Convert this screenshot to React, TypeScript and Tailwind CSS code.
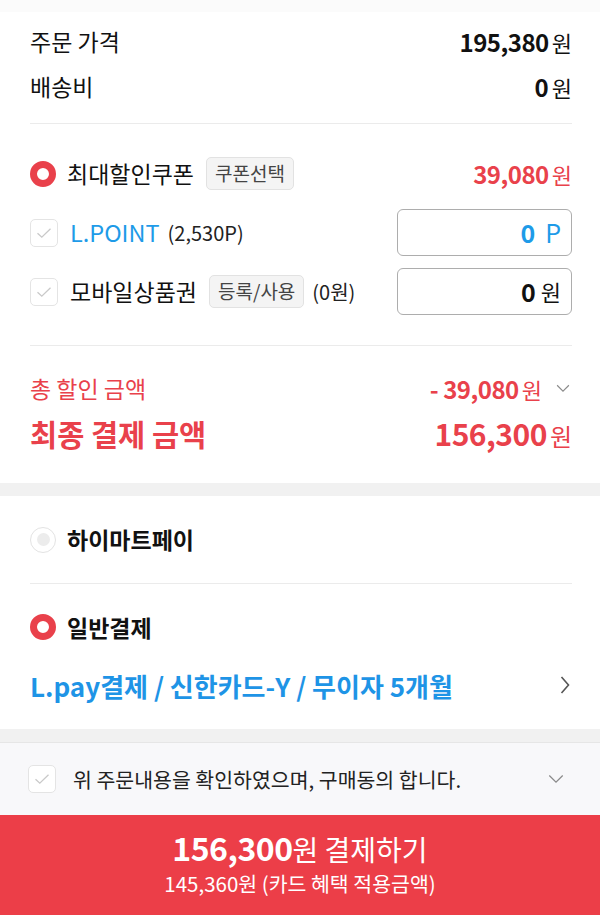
import React from "react";

/* ------------------------------------------------------------------ */
/*  Small pieces                                                       */
/* ------------------------------------------------------------------ */

const FONT = { fontFamily: '"Noto Sans CJK KR", "Noto Sans", sans-serif' };

function RadioOn() {
  return (
    <span className="box-border inline-block h-[26px] w-[26px] shrink-0 rounded-full border-[7px] border-[#e9414b] bg-white" />
  );
}

function RadioOff() {
  return (
    <span className="box-border flex h-[26px] w-[26px] shrink-0 items-center justify-center rounded-full border border-[#e3e3e3] bg-white">
      <span className="h-[13px] w-[13px] rounded-full bg-[#ececec]" />
    </span>
  );
}

function CheckBox() {
  return (
    <span className="box-border flex h-[28px] w-[28px] shrink-0 items-center justify-center rounded-[5px] border border-[#e4e4e4] bg-white">
      <svg width="16" height="12" viewBox="0 0 16 12" fill="none">
        <path d="M1.5 6.2 L5.8 10.2 L14.5 1.8" stroke="#c9c9c9" strokeWidth="1.3" />
      </svg>
    </span>
  );
}

function ChevronDown({ size = 16 }: { size?: number }) {
  return (
    <svg width={size} height={size * 0.6} viewBox="0 0 16 10" fill="none">
      <path d="M1 1.5 L8 8.5 L15 1.5" stroke="#8a8a8a" strokeWidth="1.3" />
    </svg>
  );
}

function ChevronRight() {
  return (
    <svg width="10" height="18" viewBox="0 0 10 18" fill="none">
      <path d="M1.5 1 L8.5 9 L1.5 17" stroke="#555" strokeWidth="1.6" />
    </svg>
  );
}

function Tag({ children }: { children: React.ReactNode }) {
  return (
    <span className="ml-[12px] flex h-[33px] items-center rounded-[5px] border border-[#e2e2e2] bg-[#f4f4f4] px-[8px] text-[19px] text-[#444]">
      {children}
    </span>
  );
}

/* ------------------------------------------------------------------ */
/*  App                                                                */
/* ------------------------------------------------------------------ */

export default function App() {
  return (
    <div style={FONT} className="flex h-[915px] w-[600px] flex-col overflow-hidden bg-white text-[#111]">
      <div className="h-[12px] bg-[#fbfbfb]" />

      {/* Price summary */}
      <div className="pl-[30px] pr-[28px] pt-[7px]">
        <div className="flex h-[45px] items-center justify-between">
          <span className="text-[23px]">주문 가격</span>
          <span className="flex items-baseline">
            <span className="text-[24px] font-bold tracking-[-0.5px]">195,380</span>
            <span className="ml-[3px] text-[22px]">원</span>
          </span>
        </div>
        <div className="flex h-[45px] items-center justify-between">
          <span className="text-[23px]">배송비</span>
          <span className="flex items-baseline">
            <span className="text-[24px] font-bold">0</span>
            <span className="ml-[3px] text-[22px]">원</span>
          </span>
        </div>
        <div className="mt-[14px] h-px bg-[#ebebeb]" />

        {/* Discounts */}
        <div className="mt-[26px] flex flex-col gap-[12px]">
          <div className="flex h-[47px] items-center">
            <RadioOn />
            <span className="ml-[11px] text-[23px]">최대할인쿠폰</span>
            <Tag>쿠폰선택</Tag>
            <span className="ml-auto flex items-baseline text-[#e9414b]">
              <span className="text-[24px] font-bold tracking-[-0.5px]">39,080</span>
              <span className="ml-[3px] text-[22px]">원</span>
            </span>
          </div>
          <div className="flex h-[47px] items-center">
            <CheckBox />
            <span className="ml-[12px] text-[23.5px] text-[#1e9be8]">L.POINT</span>
            <span className="ml-[8px] text-[20px] text-[#222]">(2,530P)</span>
            <div className="ml-auto flex h-[47px] w-[175px] items-center justify-end rounded-[6px] border border-[#adadad] pr-[10px] text-[#1e9be8]">
              <span className="text-[25px] font-bold">0</span>
              <span className="ml-[10px] text-[25px]">P</span>
            </div>
          </div>
          <div className="flex h-[47px] items-center">
            <CheckBox />
            <span className="ml-[12px] text-[23px]">모바일상품권</span>
            <Tag>등록/사용</Tag>
            <span className="ml-[8px] text-[20px] text-[#222]">(0원)</span>
            <div className="ml-auto flex h-[47px] w-[175px] items-center justify-end rounded-[6px] border border-[#adadad] pr-[10px]">
              <span className="text-[25px] font-bold">0</span>
              <span className="ml-[5px] text-[22px]">원</span>
            </div>
          </div>
        </div>
        <div className="mt-[30px] h-px bg-[#ebebeb]" />

        {/* Totals */}
        <div className="mt-[20px] flex h-[45px] items-center justify-between text-[#e9414b]">
          <span className="text-[23px]">총 할인 금액</span>
          <span className="flex items-center">
            <span className="flex items-baseline">
              <span className="text-[24px] font-bold tracking-[-0.5px]">- 39,080</span>
              <span className="ml-[3px] text-[22px]">원</span>
            </span>
            <span className="ml-[14px] mr-[2px]">
              <ChevronDown size={14} />
            </span>
          </span>
        </div>
        <div className="flex h-[45px] items-center justify-between text-[#e9414b]">
          <span className="text-[29.5px] font-bold">최종 결제 금액</span>
          <span className="flex items-baseline">
            <span className="text-[30px] font-bold tracking-[-0.5px]">156,300</span>
            <span className="ml-[3px] text-[24px]">원</span>
          </span>
        </div>
        <div className="h-[27px]" />
      </div>

      <div className="h-[13px] bg-[#f1f1f1]" />

      {/* Payment methods */}
      <div className="pl-[30px] pr-[28px]">
        <div className="flex h-[87px] items-center">
          <RadioOff />
          <span className="ml-[11px] text-[23px] font-bold">하이마트페이</span>
        </div>
        <div className="h-px bg-[#ebebeb]" />
        <div className="mt-[21px] flex h-[44px] items-center">
          <RadioOn />
          <span className="ml-[11px] text-[23px] font-bold">일반결제</span>
        </div>
        <div className="mt-[14px] flex h-[44px] items-center justify-between">
          <span className="text-[26px] font-bold text-[#1e94e6]">
            L.pay결제 / 신한카드-Y / 무이자 5개월
          </span>
          <span className="mr-[2px]">
            <ChevronRight />
          </span>
        </div>
        <div className="h-[22px]" />
      </div>

      <div className="h-[13px] bg-[#f1f1f1]" />

      {/* Agreement */}
      <div className="flex h-[73px] items-center border-t border-[#e6e6e6] bg-[#f8f8fa] pl-[28px] pr-[36px]">
        <CheckBox />
        <span className="ml-[17px] text-[20.5px] text-[#222]">위 주문내용을 확인하였으며, 구매동의 합니다.</span>
        <span className="ml-auto">
          <ChevronDown size={16} />
        </span>
      </div>

      {/* Pay button */}
      <button
        type="button"
        className="flex flex-1 flex-col items-center justify-center bg-[#ec3e48] pb-[6px] text-white"
      >
        <span className="flex items-baseline leading-[40px]">
          <span className="text-[32px] font-bold tracking-[-0.5px]">156,300</span>
          <span className="text-[28px]">원 결제하기</span>
        </span>
        <span className="text-[20.5px] leading-[28px]">145,360원 (카드 혜택 적용금액)</span>
      </button>
    </div>
  );
}
